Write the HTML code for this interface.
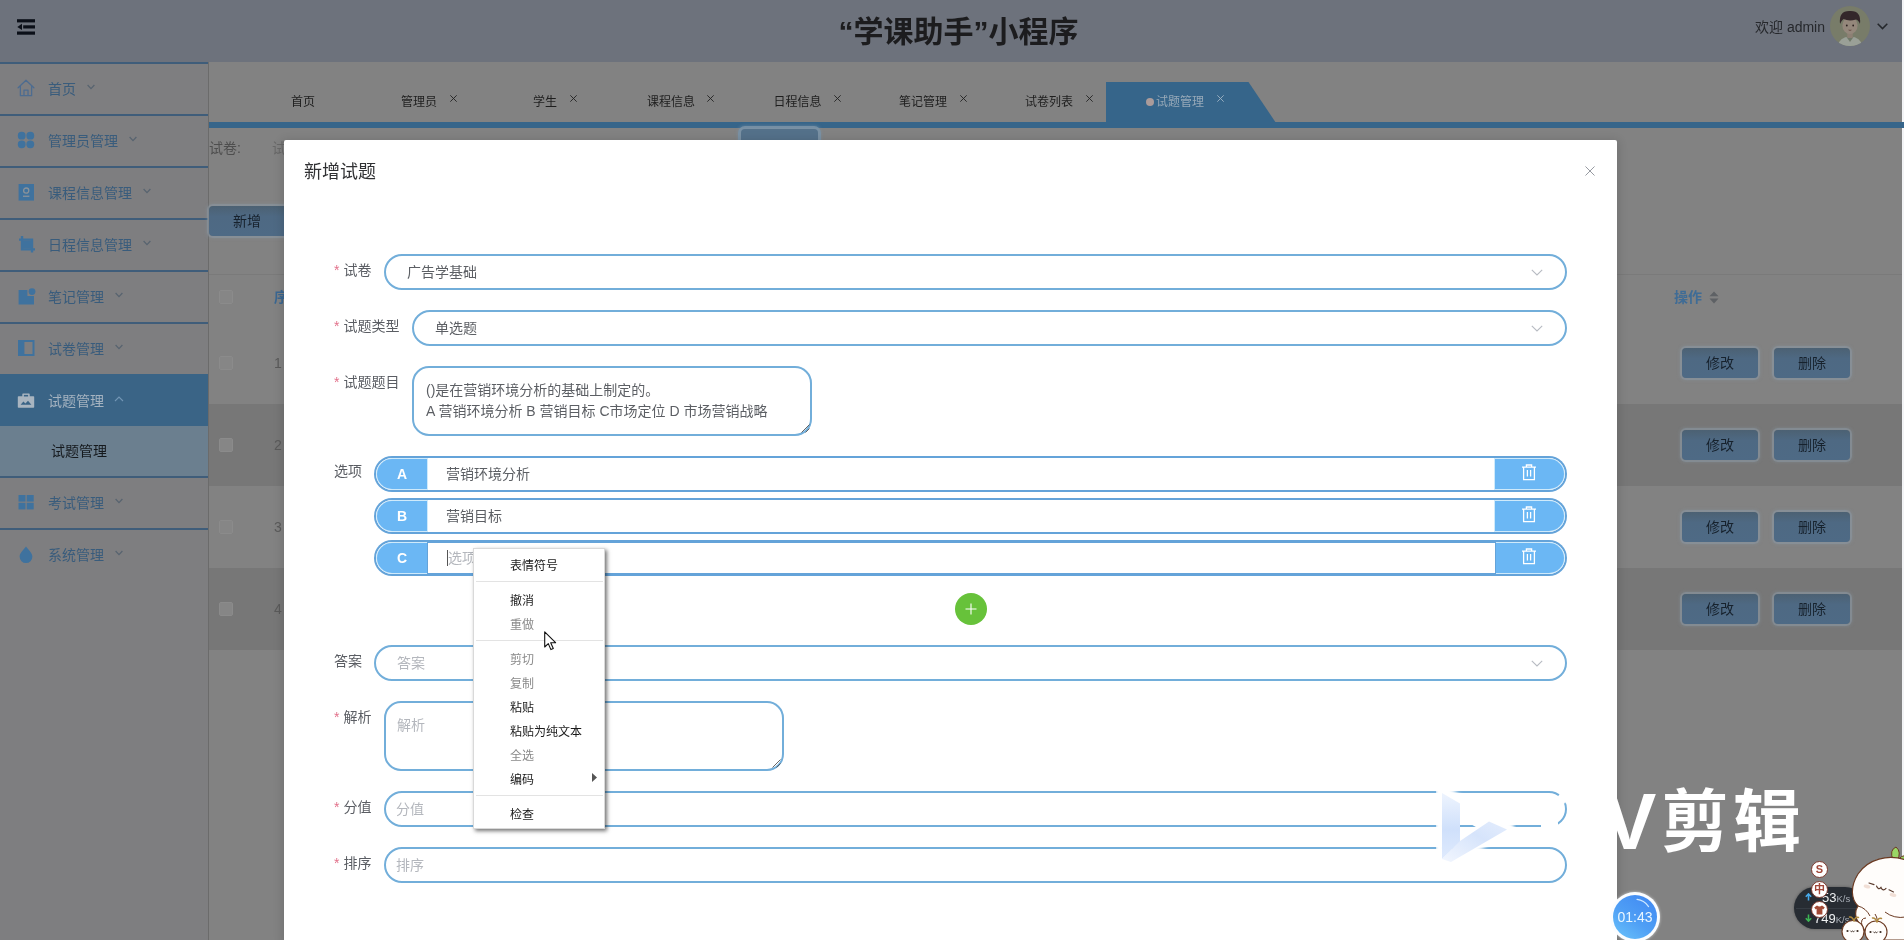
<!DOCTYPE html>
<html lang="zh-CN">
<head>
<meta charset="utf-8">
<title>“学课助手”小程序</title>
<style>
*{box-sizing:border-box;margin:0;padding:0}
html,body{width:1904px;height:940px;overflow:hidden;background:#828282}
body{position:relative;font-family:"Liberation Sans","Noto Sans CJK SC",sans-serif;font-size:14px;color:#333}
.abs{position:absolute}
#root{position:absolute;left:0;top:0;width:1904px;height:940px;overflow:hidden;will-change:transform}
/* ---------- header ---------- */
#hdr{left:0;top:0;width:1904px;height:62px;background:#6d727c}
#title{left:0;top:0;width:1917px;height:62px;line-height:64px;text-align:center;font-size:30px;font-weight:700;color:#1c1c1e;letter-spacing:0}
#welcome{left:1755px;top:17px;font-size:14px;color:#26282c;line-height:20px;white-space:nowrap}
#avatar{left:1830px;top:6px;width:40px;height:40px;border-radius:50%;background:#7d8374;overflow:hidden}
/* ---------- sidebar ---------- */
#side{left:0;top:62px;width:208px;height:878px;background:#7e7e80}
#sideline{left:208px;top:62px;width:1px;height:878px;background:#6b6b6b}
.mi{left:0;width:208px;height:52px;border-top:2px solid #3f5d7a;color:#3f74a3;font-size:14px;line-height:50px;white-space:nowrap}
.mi span.t{position:absolute;left:48px;top:0}
.mi svg.ic{position:absolute;left:18px;top:16px;overflow:visible}
.mi svg.ar{position:absolute;top:20px}
/* ---------- tabs ---------- */
#main{left:209px;top:62px;width:1695px;height:878px;background:#828282}
.tab{top:91.5px;font-size:12px;color:#1e1e1e;line-height:20px;white-space:nowrap}
.tx{top:94.5px}
#bar{left:209px;top:122px;width:1695px;height:6px;background:#36658a}
.btn{background:linear-gradient(#4c6173 0%,#4e6983 35%,#4e6a85 100%);border-radius:4px;color:#17222d;font-size:14px;text-align:center;line-height:30px;box-shadow:0 0 0 2px rgba(138,150,160,.55),0 0 3px 3px rgba(138,150,160,.28)}
.cb{width:14px;height:14px;border:1px solid #8b8b8b;border-radius:2px;background:#868686}
.rn{font-size:14px;color:#5a5a5a}

/* ---------- dialog ---------- */
#dlg{left:284px;top:140px;width:1333px;height:800px;background:#fff;border-radius:2px 2px 0 0;box-shadow:0 2px 10px 2px rgba(0,0,0,.13)}
#dtitle{left:304px;top:160px;font-size:18px;line-height:24px;color:#303133;white-space:nowrap}
.lab{font-size:14px;line-height:20px;color:#5a5d63;white-space:nowrap}
.lab i{font-style:normal;color:#e2708a;margin-right:4px}
.inp{border:2px solid #72aeda;border-radius:18px;background:#fff;height:36px}
.val{font-size:14px;line-height:20px;color:#5c5f64;white-space:nowrap}
.ph{font-size:14px;line-height:20px;color:#b4b7bd;white-space:nowrap}
.pill{left:374px;width:1193px;height:36px;border-radius:18px;background:#64a3d9;overflow:hidden}
.pill .in{position:absolute;left:2px;top:2px;right:2px;bottom:2px;border-radius:16px;background:#fff;overflow:hidden}
.pill .in:after{content:"";position:absolute;left:0;top:0;right:0;bottom:0;border-radius:16px;border:1px solid rgba(255,255,255,.0)}
.pill .pre{position:absolute;left:1px;top:1px;bottom:1px;width:50px;background:#6bb7f4;border-radius:15px 0 0 15px;box-shadow:0 0 0 1px #cfeafb;color:#fff;font-size:14px;font-weight:700;line-height:30px;text-align:center}
.pill .app{position:absolute;right:1px;top:1px;bottom:1px;width:69px;background:#6bb7f4;border-radius:0 15px 15px 0;box-shadow:0 0 0 1px #cfeafb}
.pill svg{position:absolute;left:26px;top:4px}

/* ---------- context menu ---------- */
#menu{left:473px;top:548px;width:132px;height:281px;background:#fff;border:1px solid #d9d9d9;box-shadow:2px 2px 4px rgba(0,0,0,.55)}
.m{left:510px;font-size:12px;line-height:16px;color:#1a1a1a;white-space:nowrap}
.m.d{color:#8a8a8a}
.sep{left:476px;width:127px;height:1px;background:#e3e3e3}
/* ---------- overlays ---------- */
.wmc{top:775px;font-size:65px;line-height:90px;font-weight:700;color:#fff;white-space:nowrap;font-family:"Liberation Sans","Noto Sans CJK SC",sans-serif}
</style>
</head>
<body>
<div id="root">

<!-- ================= dimmed page behind dialog ================= -->
<div class="abs" id="main"></div>
<div class="abs" id="hdr"></div>
<div class="abs" id="title">“学课助手”小程序</div>
<svg class="abs" style="left:17px;top:19px" width="18" height="16" viewBox="0 0 18 16">
  <rect x="0" y="0.200" width="18" height="3.200" fill="#0b0f18"/>
  <rect x="6.200" y="6.300" width="11.800" height="3.200" fill="#0b0f18"/>
  <rect x="0" y="12.500" width="18" height="3.200" fill="#0b0f18"/>
  <path d="M0.300 7.900 L5 4.700 V11.100 Z" fill="#0b0f18"/>
</svg>
<div class="abs" id="welcome">欢迎 admin</div>
<svg class="abs" style="left:1830px;top:6px" width="40" height="40" viewBox="0 0 40 40"><defs><clipPath id="avc"><circle cx="20" cy="20" r="20"/></clipPath></defs><circle cx="20" cy="20" r="20" fill="#787c69"/><g clip-path="url(#avc)"><path d="M8 40 Q9 31 20 30.5 Q31 31 32 40 Z" fill="#9aa097"/><path d="M16.5 31 L20 36 L23.500 31 Z" fill="#707868"/><rect x="17.300" y="25" width="5.400" height="7" fill="#8d8074"/><ellipse cx="20" cy="19.500" rx="7.600" ry="8.600" fill="#94877b"/><path d="M10 18 Q8.500 4.500 20 5 Q31.500 4.500 30 18 Q28.500 14 26 13.500 Q19 15.500 13.500 13 Q11.500 14.500 10 18 Z" fill="#33272a"/><circle cx="16.800" cy="19.500" r=".9" fill="#2b211f"/><circle cx="23.200" cy="19.500" r=".9" fill="#2b211f"/><path d="M18.600 24 Q20 24.800 21.400 24" stroke="#5a3a34" stroke-width=".7" fill="none"/></g></svg>
<svg class="abs" style="left:1877px;top:23px" width="11" height="7" viewBox="0 0 11 7"><path d="M0.700 0.700 L5.500 5.600 L10.300 0.700" fill="none" stroke="#24272b" stroke-width="1.500"/></svg>

<div class="abs" style="left:1902px;top:0;width:2px;height:940px;background:#f3f4f6"></div>
<div class="abs" id="side"></div>
<div class="abs mi" style="top:62px;color:#395c7c"><svg class="ic" style="left:17px;top:15px" width="18" height="18" viewBox="0 0 16 16"><path d="M1 7.800 L8 1.100 L15 7.800 M3 6.400 V14.800 H13 V6.400 M6.200 14.800 V9.800 H9.800 V14.800" fill="none" stroke="#4d6c90" stroke-width="1.150" stroke-linejoin="round" stroke-linecap="round"/></svg><span class="t">首页</span><svg class="ar" style="left:86px" width="10" height="6" viewBox="0 0 10 6"><path d="M1.600 1 L5 4.600 L8.400 1" fill="none" stroke="#57636f" stroke-width="1.200"/></svg></div>
<div class="abs mi" style="top:114px;color:#395c7c"><svg class="ic" width="16" height="16" viewBox="0 0 16 16"><rect x="-0.200" y="-0.200" width="7.800" height="7.800" rx="3.700" fill="#3f729e"/><rect x="8.400" y="-0.200" width="7.800" height="7.800" rx="3.700" fill="#3f729e"/><rect x="-0.200" y="8.400" width="7.800" height="7.800" rx="3.700" fill="#3f729e"/><rect x="8.400" y="8.400" width="7.800" height="7.800" rx="3.700" fill="#3f729e"/></svg><span class="t">管理员管理</span><svg class="ar" style="left:128px" width="10" height="6" viewBox="0 0 10 6"><path d="M1.600 1 L5 4.600 L8.400 1" fill="none" stroke="#57636f" stroke-width="1.200"/></svg></div>
<div class="abs mi" style="top:166px;color:#395c7c"><svg class="ic" width="16" height="16" viewBox="0 0 16 16"><rect x="0.6" y="0" width="15.4" height="16.6" fill="#3f729e"/><circle cx="8.2" cy="6.6" r="2.6" fill="none" stroke="#8a9299" stroke-width="1.3"/><rect x="5" y="11.6" width="6.4" height="1.3" fill="#8a9299"/></svg><span class="t">课程信息管理</span><svg class="ar" style="left:142px" width="10" height="6" viewBox="0 0 10 6"><path d="M1.600 1 L5 4.600 L8.400 1" fill="none" stroke="#57636f" stroke-width="1.200"/></svg></div>
<div class="abs mi" style="top:218px;color:#395c7c"><svg class="ic" width="16" height="16" viewBox="0 0 16 16"><path d="M4 0 V13.4 H17 M1 3.6 H14 V16.6" fill="none" stroke="#3f729e" stroke-width="2.4"/><rect x="5" y="4.6" width="8" height="8" fill="#3f729e"/></svg><span class="t">日程信息管理</span><svg class="ar" style="left:142px" width="10" height="6" viewBox="0 0 10 6"><path d="M1.600 1 L5 4.600 L8.400 1" fill="none" stroke="#57636f" stroke-width="1.200"/></svg></div>
<div class="abs mi" style="top:270px;color:#395c7c"><svg class="ic" width="16" height="16" viewBox="0 0 16 16"><path d="M0.6 2 H9.4 V8 H16 V16.6 H0.6 Z" fill="#3f729e"/><circle cx="14" cy="3.6" r="3.4" fill="#3f729e"/></svg><span class="t">笔记管理</span><svg class="ar" style="left:114px" width="10" height="6" viewBox="0 0 10 6"><path d="M1.600 1 L5 4.600 L8.400 1" fill="none" stroke="#57636f" stroke-width="1.200"/></svg></div>
<div class="abs mi" style="top:322px;color:#395c7c"><svg class="ic" width="16" height="16" viewBox="0 0 16 16"><rect x="1" y="1" width="14.5" height="14" fill="none" stroke="#3f729e" stroke-width="2"/><rect x="1" y="1" width="5.4" height="14" fill="#3f729e"/></svg><span class="t">试卷管理</span><svg class="ar" style="left:114px" width="10" height="6" viewBox="0 0 10 6"><path d="M1.600 1 L5 4.600 L8.400 1" fill="none" stroke="#57636f" stroke-width="1.200"/></svg></div>
<div class="abs mi" style="top:374px;border-top-color:#3a6486;background:#3a6486;color:#a5b3c0"><svg class="ic" width="16" height="16" viewBox="0 0 16 16"><path d="M0.5 5 H15.5 V15 H0.5 Z M5 5 V2.2 H11 V5" fill="#a9b5c0" stroke="#a9b5c0" stroke-width="1.4" stroke-linejoin="round" fill-rule="evenodd"/><path d="M2.6 12.8 L5.4 9.6 L7.4 11.4 L10 8.8 L13.4 12.8 Z" fill="#3a6486"/><rect x="5.9" y="2.9" width="4.2" height="1.6" fill="#3a6486"/></svg><span class="t">试题管理</span><svg class="ar" style="left:114px" width="10" height="6" viewBox="0 0 10 6"><path d="M1 5 L5 1 L9 5" fill="none" stroke="#7396b5" stroke-width="1.1"/></svg></div>
<div class="abs mi" style="top:476px;color:#395c7c"><svg class="ic" width="16" height="16" viewBox="0 0 16 16"><rect x="0.5" y="1" width="7" height="6.6" fill="#3f729e"/><rect x="8.7" y="1" width="7" height="6.6" fill="#3f729e"/><rect x="0.5" y="8.8" width="7" height="6.6" fill="#3f729e"/><rect x="8.7" y="8.8" width="7" height="6.6" fill="#3f729e"/></svg><span class="t">考试管理</span><svg class="ar" style="left:114px" width="10" height="6" viewBox="0 0 10 6"><path d="M1.600 1 L5 4.600 L8.400 1" fill="none" stroke="#57636f" stroke-width="1.200"/></svg></div>
<div class="abs mi" style="top:528px;color:#395c7c"><svg class="ic" width="16" height="16" viewBox="0 0 16 16"><path d="M8 0.6 C10.5 3.8 14.4 7.2 14.4 10.6 A6.4 6.4 0 0 1 1.6 10.6 C1.6 7.2 5.5 3.8 8 0.6 Z" fill="#3f729e"/></svg><span class="t">系统管理</span><svg class="ar" style="left:114px" width="10" height="6" viewBox="0 0 10 6"><path d="M1.600 1 L5 4.600 L8.400 1" fill="none" stroke="#57636f" stroke-width="1.200"/></svg></div>
<div class="abs" style="left:0;top:426px;width:208px;height:50px;background:#6b7f8f"></div>
<div class="abs" style="left:51px;top:426px;height:50px;line-height:51px;font-size:14px;color:#15191d;white-space:nowrap">试题管理</div>
<div class="abs" id="sideline"></div>

<div class="abs" id="bar"></div>
<div class="abs tab" style="left:291px">首页</div>
<div class="abs tab" style="left:401px">管理员</div>
<svg class="abs tx" style="left:449.5px;top:94.5px" width="7" height="7" viewBox="0 0 7 7"><path d="M0.3 0.3 L6.7 6.7 M6.7 0.3 L0.3 6.7" stroke="#222" stroke-width="0.9" fill="none"/></svg>
<div class="abs tab" style="left:533px">学生</div>
<svg class="abs tx" style="left:569.5px;top:94.5px" width="7" height="7" viewBox="0 0 7 7"><path d="M0.3 0.3 L6.7 6.7 M6.7 0.3 L0.3 6.7" stroke="#222" stroke-width="0.9" fill="none"/></svg>
<div class="abs tab" style="left:647px">课程信息</div>
<svg class="abs tx" style="left:707px;top:94.5px" width="7" height="7" viewBox="0 0 7 7"><path d="M0.3 0.3 L6.7 6.7 M6.7 0.3 L0.3 6.7" stroke="#222" stroke-width="0.9" fill="none"/></svg>
<div class="abs tab" style="left:773.5px">日程信息</div>
<svg class="abs tx" style="left:833.5px;top:94.5px" width="7" height="7" viewBox="0 0 7 7"><path d="M0.3 0.3 L6.7 6.7 M6.7 0.3 L0.3 6.7" stroke="#222" stroke-width="0.9" fill="none"/></svg>
<div class="abs tab" style="left:899px">笔记管理</div>
<svg class="abs tx" style="left:959.5px;top:94.5px" width="7" height="7" viewBox="0 0 7 7"><path d="M0.3 0.3 L6.7 6.7 M6.7 0.3 L0.3 6.7" stroke="#222" stroke-width="0.9" fill="none"/></svg>
<div class="abs tab" style="left:1025px">试卷列表</div>
<svg class="abs tx" style="left:1085.5px;top:94.5px" width="7" height="7" viewBox="0 0 7 7"><path d="M0.3 0.3 L6.7 6.7 M6.7 0.3 L0.3 6.7" stroke="#222" stroke-width="0.9" fill="none"/></svg>
<svg class="abs" style="left:1106px;top:82px" width="171" height="41" viewBox="0 0 171 41"><path d="M0 0 H142.5 L170 41 H0 Z" fill="#36658a"/></svg>
<div class="abs" style="left:1146px;top:97.5px;width:8px;height:8px;border-radius:50%;background:#ab9b9a"></div>
<div class="abs tab" style="left:1156px;color:#97a9b8">试题管理</div>
<svg class="abs tx" style="left:1216.5px;top:94.5px" width="7" height="7" viewBox="0 0 7 7"><path d="M0.3 0.3 L6.7 6.7 M6.7 0.3 L0.3 6.7" stroke="#9fb3c4" stroke-width="0.9" fill="none"/></svg>
<div class="abs" style="left:209px;top:138px;font-size:14px;line-height:20px;color:#4e4e4e;white-space:nowrap">试卷:</div>
<div class="abs" style="left:272px;top:138px;font-size:14px;line-height:20px;color:#686868;white-space:nowrap">试卷</div>
<div class="abs btn" style="left:741px;top:129px;width:77px;height:40px;line-height:40px;background:#54718a;box-shadow:0 0 0 3px rgba(122,146,166,.9),0 0 3px 4px rgba(122,146,166,.4)">查询</div>
<div class="abs btn" style="left:209px;top:206px;width:80px;height:30px;text-align:left;padding-left:24px">新增</div>
<div class="abs" style="left:209px;top:274px;width:1693px;height:1px;background:#7a7a7a"></div>
<div class="abs" style="left:209px;top:404px;width:1693px;height:82px;background:#777777"></div>
<div class="abs" style="left:209px;top:568px;width:1693px;height:82px;background:#777777"></div>
<div class="abs cb" style="left:219px;top:290px"></div>
<div class="abs" style="left:274px;top:287px;font-size:14px;font-weight:700;line-height:20px;color:#3a6792;white-space:nowrap">序号</div>
<div class="abs" style="left:1674px;top:287px;font-size:14px;font-weight:700;line-height:20px;color:#3f6c96;white-space:nowrap">操作</div>
<svg class="abs" style="left:1709px;top:291px" width="10" height="13" viewBox="0 0 10 13"><path d="M0.5 5.2 L5 0.4 L9.5 5.2 Z M0.5 7.6 L5 12.4 L9.5 7.6 Z" fill="#5e6165"/></svg>
<div class="abs cb" style="left:219px;top:356px"></div>
<div class="abs rn" style="left:274px;top:353px;line-height:20px">1</div>
<div class="abs btn" style="left:1682px;top:348px;width:76px;height:30px">修改</div>
<div class="abs btn" style="left:1774px;top:348px;width:76px;height:30px">删除</div>
<div class="abs cb" style="left:219px;top:438px"></div>
<div class="abs rn" style="left:274px;top:435px;line-height:20px">2</div>
<div class="abs btn" style="left:1682px;top:430px;width:76px;height:30px">修改</div>
<div class="abs btn" style="left:1774px;top:430px;width:76px;height:30px">删除</div>
<div class="abs cb" style="left:219px;top:520px"></div>
<div class="abs rn" style="left:274px;top:517px;line-height:20px">3</div>
<div class="abs btn" style="left:1682px;top:512px;width:76px;height:30px">修改</div>
<div class="abs btn" style="left:1774px;top:512px;width:76px;height:30px">删除</div>
<div class="abs cb" style="left:219px;top:602px"></div>
<div class="abs rn" style="left:274px;top:599px;line-height:20px">4</div>
<div class="abs btn" style="left:1682px;top:594px;width:76px;height:30px">修改</div>
<div class="abs btn" style="left:1774px;top:594px;width:76px;height:30px">删除</div>

<!-- ================= dialog ================= -->
<div class="abs" id="dlg"></div>
<div class="abs" id="dtitle">新增试题</div>
<svg class="abs" style="left:1585px;top:166px" width="10" height="10" viewBox="0 0 11 11"><path d="M0.5 0.5 L10.5 10.5 M10.5 0.5 L0.5 10.5" stroke="#8c9097" stroke-width="1" fill="none"/></svg>
<div class="abs lab" style="left:334px;top:260px"><i>*</i>试卷</div>
<div class="abs inp" style="left:384px;top:254px;width:1183px"></div>
<div class="abs val" style="left:407px;top:262px">广告学基础</div>
<svg class="abs" style="left:1531px;top:269px" width="12" height="7" viewBox="0 0 12 7"><path d="M0.8 0.8 L6 6 L11.2 0.8" fill="none" stroke="#b7bbc2" stroke-width="1.1"/></svg>
<div class="abs lab" style="left:334px;top:316px"><i>*</i>试题类型</div>
<div class="abs inp" style="left:412px;top:310px;width:1155px"></div>
<div class="abs val" style="left:435px;top:318px">单选题</div>
<svg class="abs" style="left:1531px;top:325px" width="12" height="7" viewBox="0 0 12 7"><path d="M0.8 0.8 L6 6 L11.2 0.8" fill="none" stroke="#b7bbc2" stroke-width="1.1"/></svg>
<div class="abs lab" style="left:334px;top:372px"><i>*</i>试题题目</div>
<div class="abs inp" style="left:412px;top:366px;width:400px;height:70px;border-radius:17px"></div>
<div class="abs val" style="left:426px;top:380px;line-height:21px">()是在营销环境分析的基础上制定的。<br>A 营销环境分析 B 营销目标 C市场定位 D 市场营销战略</div>
<svg class="abs" style="left:801px;top:424px" width="9" height="9" viewBox="0 0 9 9"><path d="M8.5 0.5 L0.5 8.5 M8.5 4.5 L4.5 8.5" stroke="#555" stroke-width="0.9" fill="none"/></svg>
<div class="abs lab" style="left:334px;top:461px">选项</div>
<div class="abs pill" style="top:456px"><div class="in"><div class="pre">A</div><div class="app"><svg width="16" height="18" viewBox="0 0 16 18"><path d="M1 4.2 H15 M5.4 4 V2 H10.6 V4 M2.6 4.4 V16.6 H13.4 V4.4 M6.4 7 V13.6 M9.6 7 V13.6" fill="none" stroke="#fff" stroke-width="1.3"/></svg></div></div></div>
<div class="abs val" style="left:446px;top:464px">营销环境分析</div>
<div class="abs pill" style="top:498px"><div class="in"><div class="pre">B</div><div class="app"><svg width="16" height="18" viewBox="0 0 16 18"><path d="M1 4.2 H15 M5.4 4 V2 H10.6 V4 M2.6 4.4 V16.6 H13.4 V4.4 M6.4 7 V13.6 M9.6 7 V13.6" fill="none" stroke="#fff" stroke-width="1.3"/></svg></div></div></div>
<div class="abs val" style="left:446px;top:506px">营销目标</div>
<div class="abs pill" style="top:540px"><div class="in"><div class="pre">C</div><div class="app"><svg width="16" height="18" viewBox="0 0 16 18"><path d="M1 4.2 H15 M5.4 4 V2 H10.6 V4 M2.6 4.4 V16.6 H13.4 V4.4 M6.4 7 V13.6 M9.6 7 V13.6" fill="none" stroke="#fff" stroke-width="1.3"/></svg></div></div></div>
<div class="abs" style="left:427px;top:542px;width:1069px;height:32px;border:1px solid #64a3d9;background:#fff"></div>
<div class="abs ph" style="left:448px;top:548px">选项</div>
<div class="abs" style="left:447px;top:550px;width:1px;height:16px;background:#555"></div>
<div class="abs" style="left:955px;top:593px;width:32px;height:32px;border-radius:50%;background:#67c23a"></div>
<svg class="abs" style="left:965px;top:603px" width="12" height="12" viewBox="0 0 12 12"><path d="M6 0.5 V11.5 M0.5 6 H11.5" stroke="#fff" stroke-width="1.1"/></svg>
<div class="abs lab" style="left:334px;top:651px">答案</div>
<div class="abs inp" style="left:374px;top:645px;width:1193px"></div>
<div class="abs ph" style="left:397px;top:653px">答案</div>
<svg class="abs" style="left:1531px;top:660px" width="12" height="7" viewBox="0 0 12 7"><path d="M0.8 0.8 L6 6 L11.2 0.8" fill="none" stroke="#b7bbc2" stroke-width="1.1"/></svg>
<div class="abs lab" style="left:334px;top:707px"><i>*</i>解析</div>
<div class="abs inp" style="left:384px;top:701px;width:400px;height:70px;border-radius:17px"></div>
<div class="abs ph" style="left:397px;top:715px">解析</div>
<svg class="abs" style="left:772px;top:759px" width="9" height="9" viewBox="0 0 9 9"><path d="M8.5 0.5 L0.5 8.5 M8.5 4.5 L4.5 8.5" stroke="#555" stroke-width="0.9" fill="none"/></svg>
<div class="abs lab" style="left:334px;top:797px"><i>*</i>分值</div>
<div class="abs inp" style="left:384px;top:791px;width:1183px"></div>
<div class="abs ph" style="left:396px;top:799px">分值</div>
<div class="abs lab" style="left:334px;top:853px"><i>*</i>排序</div>
<div class="abs inp" style="left:384px;top:847px;width:1183px"></div>
<div class="abs ph" style="left:396px;top:855px">排序</div>

<!-- ================= context menu & overlays ================= -->
<div class="abs" id="menu"></div>
<div class="abs m" style="top:558px">表情符号</div>
<div class="abs m" style="top:593px">撤消</div>
<div class="abs m d" style="top:617px">重做</div>
<div class="abs m d" style="top:652px">剪切</div>
<div class="abs m d" style="top:676px">复制</div>
<div class="abs m" style="top:700px">粘贴</div>
<div class="abs m" style="top:724px">粘贴为纯文本</div>
<div class="abs m d" style="top:748px">全选</div>
<div class="abs m" style="top:772px">编码</div>
<div class="abs m" style="top:807px">检查</div>
<div class="abs sep" style="top:581px"></div>
<div class="abs sep" style="top:640px"></div>
<div class="abs sep" style="top:795px"></div>
<svg class="abs" style="left:592px;top:773px" width="5" height="9" viewBox="0 0 5 9"><path d="M0 0 L5 4.5 L0 9 Z" fill="#555"/></svg>
<svg class="abs" style="left:544px;top:631px" width="13" height="20" viewBox="0 0 13 20"><path d="M0.7 0.8 V16 L4.3 12.6 L6.9 18.6 L9.3 17.5 L6.7 11.7 H11.6 Z" fill="#fff" stroke="#111" stroke-width="1.1" stroke-linejoin="round"/></svg>
<svg class="abs" style="left:1436px;top:784px" width="80" height="84" viewBox="0 0 80 84"><defs><linearGradient id="g1" x1="0" y1="0" x2="0" y2="1"><stop offset="0" stop-color="#eef4fe"/><stop offset=".55" stop-color="#cfe0fb"/><stop offset="1" stop-color="#dfeafd"/></linearGradient><linearGradient id="g2" x1="0" y1="1" x2="1" y2="0"><stop offset="0" stop-color="#f2f6fe"/><stop offset=".6" stop-color="#d6e4fb"/><stop offset="1" stop-color="#e4edfd"/></linearGradient><filter id="bl"><feGaussianBlur stdDeviation="1.5"/></filter></defs>
<path d="M4 4 L74 44 L10 80 L4 76 Z" fill="none" stroke="#fff" stroke-width="9" stroke-linejoin="round" filter="url(#bl)"/>
<path d="M6 8 L72 45 L56 52 L6 24 Z" fill="#fff"/>
<path d="M6 9 L24 19.500 V58 L6 75 Z" fill="url(#g1)"/>
<path d="M24 57 L53 37.500 L71 45.500 L15 78 L6 75 Z" fill="url(#g2)"/>
</svg>
<div class="abs" style="left:1558px;top:793px;width:10px;height:10px;background:#fff;border-radius:4px;filter:blur(.6px);transform:rotate(35deg)"></div>
<div class="abs" style="left:1541px;top:820px;width:17px;height:10px;background:#fff;border-radius:3px;filter:blur(.7px)"></div>
<div class="abs wmc" style="left:1569px;font-size:54px;font-weight:700;top:784px">E</div>
<div class="abs wmc" style="left:1603px;font-size:80px;font-weight:700;top:777px">V</div>
<div class="abs wmc" style="left:1661px;font-size:68px;top:777px">剪</div>
<div class="abs wmc" style="left:1733px;font-size:68px;top:777px">辑</div>
<div class="abs" style="left:1610px;top:892px;width:50px;height:50px;border-radius:50%;background:#fbfdff;box-shadow:0 0 3px rgba(255,255,255,.6)"></div>
<div class="abs" style="left:1613px;top:895px;width:44px;height:44px;border-radius:50%;background:linear-gradient(35deg,#6ac4fb 0%,#4f9ff5 45%,#3f86f2 100%);color:#eaf6ff;font-size:14px;line-height:45px;text-align:center;letter-spacing:0">01:43</div>
<svg class="abs" style="left:1636px;top:898px" width="14" height="10" viewBox="0 0 14 10"><path d="M1 1.4 Q8 2 12.6 8.6" fill="none" stroke="#cfe9ff" stroke-width="1.2" stroke-linecap="round"/></svg>
<div class="abs" style="left:1794px;top:887px;width:72px;height:42px;border-radius:21px;background:#272c33;box-shadow:0 0 3px rgba(0,0,0,.35)"></div>
<div class="abs" style="left:1796px;top:907.5px;width:66px;height:1px;background:#353b43"></div>
<svg class="abs" style="left:1805px;top:893px" width="7" height="8" viewBox="0 0 9 10"><path d="M4.500 9.500 V1.500 M1 4.600 L4.500 1 L8 4.600" fill="none" stroke="#46a9ea" stroke-width="2"/></svg>
<svg class="abs" style="left:1805px;top:914px" width="7" height="8" viewBox="0 0 9 10"><path d="M4.500 0.500 V8.500 M1 5.400 L4.500 9 L8 5.400" fill="none" stroke="#3cb654" stroke-width="2"/></svg>
<div class="abs" style="left:1822px;top:888px;font-size:13px;line-height:20px;color:#eef0f2;white-space:nowrap">53<span style="font-size:9.500px;color:#aab0b9">K/s</span></div>
<div class="abs" style="left:1814px;top:909px;font-size:13px;line-height:20px;color:#eef0f2;white-space:nowrap">749<span style="font-size:9.500px;color:#aab0b9">K/s</span></div>
<div class="abs" style="left:1811px;top:860.5px;width:17px;height:17px;border-radius:50%;background:#fff;border:1px solid #7e3b30;color:#a2483a;font-size:11px;font-weight:700;line-height:15px;text-align:center">S</div>
<div class="abs" style="left:1811px;top:881px;width:17px;height:17px;border-radius:50%;background:#fff;border:1px solid #7e3b30;color:#a2483a;font-size:11px;line-height:14px;text-align:center;font-weight:700">中</div>
<div class="abs" style="left:1811px;top:901px;width:17px;height:17px;border-radius:50%;background:#fff;border:1px solid #7e3b30"></div>
<svg class="abs" style="left:1814px;top:905px" width="11" height="10" viewBox="0 0 11 10"><path d="M3 0.4 Q5.5 2.4 8 0.4 L10.8 2.6 L9.2 4.4 L8.4 3.8 V9.6 H2.6 V3.8 L1.8 4.4 L0.2 2.6 Z" fill="#a24a36"/></svg>
<svg class="abs" style="left:1836px;top:842px" width="68" height="98" viewBox="0 0 68 98">
<path d="M86 88 Q70 96 52 86" fill="none" stroke="#79b552" stroke-width="4"/>
<path d="M57 18 Q53 8 60 5 Q66 10 61 19 Z" fill="#9ad765" stroke="#6b3a22" stroke-width="1"/>
<path d="M61 20 Q65 12 72 14 V22 Q66 24 61 20 Z" fill="#9ad765" stroke="#6b3a22" stroke-width="1"/>
<path d="M70 18 C52 12 32 17 22 32 C14 45 15 57 22 64 C18 70 19 78 26 84 L34 98 H70 Z" fill="#fffdfb" stroke="#6b3a22" stroke-width="1.200"/>
<path d="M22 64 Q30 66 34 74 M49 70 Q58 77 70 75 M40 84 Q43 78 39 72 M26 84 Q24 76 30 76" fill="none" stroke="#6b3a22" stroke-width="1"/>
<path d="M33 41 L38 42.600 M53 47.800 L57.500 50 M40.500 44 Q42.400 48.600 45 45.400 Q47 49.800 50 46.400" fill="none" stroke="#5a3a2c" stroke-width="1.150" stroke-linecap="round"/>
<ellipse cx="31" cy="44.500" rx="3.400" ry="1.800" fill="#eed9cf" opacity=".85" transform="rotate(14 31 44.500)"/><ellipse cx="57" cy="53" rx="3.400" ry="1.800" fill="#eed9cf" opacity=".85" transform="rotate(14 57 53)"/>
<circle cx="17" cy="89.500" r="11" fill="#fffdfb" stroke="#6b3a22" stroke-width="1.100"/>
<circle cx="40" cy="90" r="11" fill="#fffdfb" stroke="#6b3a22" stroke-width="1.100"/>
<path d="M18 79 Q16.500 74.500 13.500 75 M18 79 Q19.500 74 22.500 75.500 M41 80 Q39.500 75.500 36.500 76 M41 80 Q42.500 75 45.500 76.500" fill="none" stroke="#b08a3e" stroke-width="1.500" stroke-linecap="round"/>
<circle cx="11.500" cy="89" r="1.100" fill="#3a2a22"/><circle cx="21.500" cy="89" r="1.100" fill="#3a2a22"/><circle cx="34.500" cy="90" r="1.100" fill="#3a2a22"/><circle cx="44.500" cy="90" r="1.100" fill="#3a2a22"/>
<path d="M14.500 89 q1 1.800 2 0 q1 1.800 2 0 M37.500 90 q1 1.800 2 0 q1 1.800 2 0" fill="none" stroke="#3a2a22" stroke-width="1" stroke-linecap="round"/>
</svg>

</div>
</body>
</html>
